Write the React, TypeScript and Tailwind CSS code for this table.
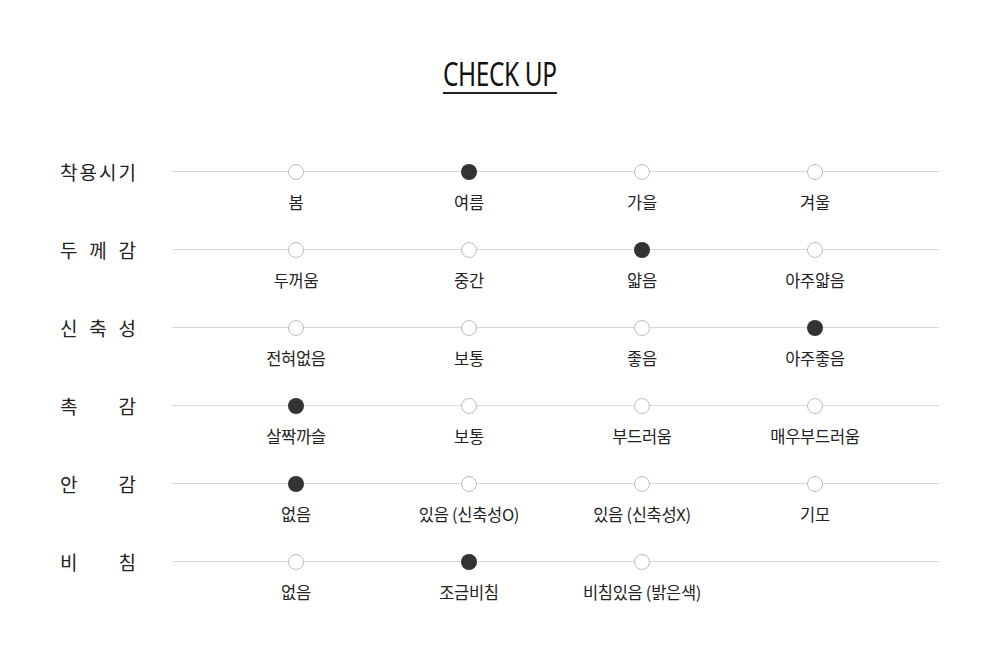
const rows = [
  { label: "착용시기", options: ["봄", "여름", "가을", "겨울"], checked: 1 },
  { label: "두께감", options: ["두꺼움", "중간", "얇음", "아주얇음"], checked: 2 },
  { label: "신축성", options: ["전혀없음", "보통", "좋음", "아주좋음"], checked: 3 },
  { label: "촉감", options: ["살짝까슬", "보통", "부드러움", "매우부드러움"], checked: 0 },
  { label: "안감", options: ["없음", "있음 (신축성O)", "있음 (신축성X)", "기모"], checked: 0 },
  { label: "비침", options: ["없음", "조금비침", "비침있음 (밝은색)"], checked: 1 },
];

export default function App() {
  return (
    <div className="w-[1000px] h-[661px] bg-white text-[#222] font-['Noto_Sans_CJK_KR','Noto_Sans',sans-serif]">
      <div className="flex justify-center pt-[58px]">
        <h2 className="scale-x-[0.74] border-b-2 border-[#222] pb-[2px] text-[33px] leading-[32px] font-['Noto_Sans',sans-serif] tracking-[-0.5px] text-[#111]">
          CHECK UP
        </h2>
      </div>

      <div className="mt-[70px] pl-[60px] pr-[61px]">
        {rows.map((row) => (
          <div key={row.label} className="flex items-start h-[78px]">
            <div className="w-[112px] shrink-0 h-[16px] flex items-center pb-[2px]">
              <div className="w-[76px] flex justify-between text-[19px] leading-none">
                {row.label.split("").map((ch, i) => (
                  <span key={i}>{ch}</span>
                ))}
              </div>
            </div>
            <div className="relative flex-1">
              <div className="absolute left-0 right-0 top-[7px] h-px bg-[#d9d9d9]" />
              <div className="relative grid grid-cols-[repeat(4,173px)] pl-[37.5px]">
                {row.options.map((opt, i) => (
                  <div key={opt} className="flex flex-col items-center">
                    <div
                      className={
                        i === row.checked
                          ? "w-[16px] h-[16px] rounded-full bg-[#333]"
                          : "w-[16px] h-[16px] rounded-full bg-white border border-[#bdbdbd]"
                      }
                    />
                    <div className="mt-[12px] text-[16.5px] leading-[20px] whitespace-nowrap tracking-[-0.3px]">
                      {opt}
                    </div>
                  </div>
                ))}
              </div>
            </div>
          </div>
        ))}
      </div>
    </div>
  );
}
